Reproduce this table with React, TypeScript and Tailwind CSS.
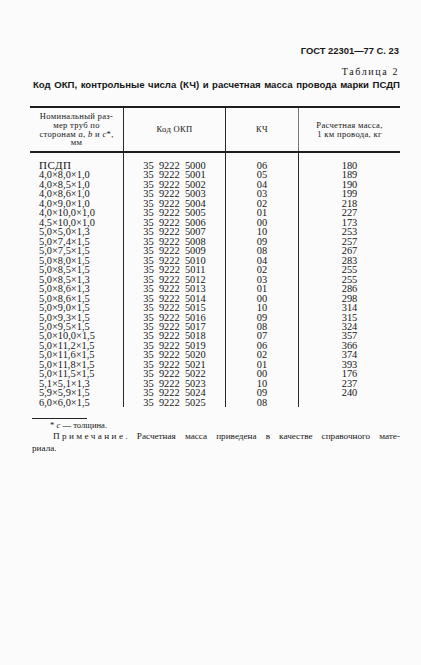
import React from 'react';

type Row = { size: string; code: string; kch: string; mass: string };

const rows: Row[] = [
  { size: 'ПСДП', code: '5000', kch: '06', mass: '180' },
  { size: '4,0×8,0×1,0', code: '5001', kch: '05', mass: '189' },
  { size: '4,0×8,5×1,0', code: '5002', kch: '04', mass: '190' },
  { size: '4,0×8,6×1,0', code: '5003', kch: '03', mass: '199' },
  { size: '4,0×9,0×1,0', code: '5004', kch: '02', mass: '218' },
  { size: '4,0×10,0×1,0', code: '5005', kch: '01', mass: '227' },
  { size: '4,5×10,0×1,0', code: '5006', kch: '00', mass: '173' },
  { size: '5,0×5,0×1,3', code: '5007', kch: '10', mass: '253' },
  { size: '5,0×7,4×1,5', code: '5008', kch: '09', mass: '257' },
  { size: '5,0×7,5×1,5', code: '5009', kch: '08', mass: '267' },
  { size: '5,0×8,0×1,5', code: '5010', kch: '04', mass: '283' },
  { size: '5,0×8,5×1,5', code: '5011', kch: '02', mass: '255' },
  { size: '5,0×8,5×1,3', code: '5012', kch: '03', mass: '255' },
  { size: '5,0×8,6×1,3', code: '5013', kch: '01', mass: '286' },
  { size: '5,0×8,6×1,5', code: '5014', kch: '00', mass: '298' },
  { size: '5,0×9,0×1,5', code: '5015', kch: '10', mass: '314' },
  { size: '5,0×9,3×1,5', code: '5016', kch: '09', mass: '315' },
  { size: '5,0×9,5×1,5', code: '5017', kch: '08', mass: '324' },
  { size: '5,0×10,0×1,5', code: '5018', kch: '07', mass: '357' },
  { size: '5,0×11,2×1,5', code: '5019', kch: '06', mass: '366' },
  { size: '5,0×11,6×1,5', code: '5020', kch: '02', mass: '374' },
  { size: '5,0×11,8×1,5', code: '5021', kch: '01', mass: '393' },
  { size: '5,0×11,5×1,5', code: '5022', kch: '00', mass: '176' },
  { size: '5,1×5,1×1,3', code: '5023', kch: '10', mass: '237' },
  { size: '5,9×5,9×1,5', code: '5024', kch: '09', mass: '240' },
  { size: '6,0×6,0×1,5', code: '5025', kch: '08', mass: '' },
];

const grid = 'grid grid-cols-[94px_102px_73px_101px]';

export default function App() {
  return (
    <div className="w-[421px] h-[665px] bg-[#fbfbfb] pt-[45px] pl-[30px] pr-[21px] font-['Liberation_Serif',serif] text-[#161616]">
      <div className="flex justify-end h-[12px] leading-[12px] text-[9.4px] font-bold font-['Liberation_Sans',sans-serif] pr-[1px]">
        ГОСТ 22301—77 С. 23
      </div>

      <div className="mt-[9px] flex justify-end h-[12px] leading-[12px] text-[10px] tracking-[1.6px] pr-[1px]">
        Таблица 2
      </div>

      <div className="mt-[1px] h-[12px] leading-[12px] text-[9.6px] font-bold font-['Liberation_Sans',sans-serif] text-justify [text-align-last:justify] pl-[3px]">
        Код ОКП, контрольные числа (КЧ) и расчетная масса провода марки ПСДП
      </div>

      {/* table */}
      <div className="mt-[15px]">
        <div className={`${grid} h-[47px] border-t-2 border-b-2 border-[#1e1e1e] text-[8.6px] leading-[8.6px] tracking-[0.3px] text-center`}>
          <div className="flex flex-col items-center justify-center border-r border-[#2a2a2a]">
            <span>Номинальный раз-</span>
            <span>мер труб по</span>
            <span>
              сторонам <i>a</i>, <i>b</i> и <i>c</i>*,
            </span>
            <span>мм</span>
          </div>
          <div className="flex items-center justify-center border-r border-[#2a2a2a]">Код ОКП</div>
          <div className="flex items-center justify-center border-r border-[#777]">КЧ</div>
          <div className="flex flex-col items-center justify-center">
            <span>Расчетная масса,</span>
            <span>1 км провода, кг</span>
          </div>
        </div>

        <div className={`${grid} h-[8px]`}>
          <div className="border-r border-[#2a2a2a]" />
          <div className="border-r border-[#2a2a2a]" />
          <div className="border-r border-[#2a2a2a]" />
          <div />
        </div>

        {rows.map((r, i) => (
          <div key={r.code} className={`${grid} h-[9.48px] leading-[9.48px] text-[10.4px]`}>
            <div className={`pl-[9px] border-r border-[#2a2a2a] ${i === 0 ? 'text-[11px] tracking-[0.6px]' : ''}`}>
              {r.size}
            </div>
            <div className="text-center border-r border-[#2a2a2a] whitespace-pre">35  9222  {r.code}</div>
            <div className="text-center border-r border-[#2a2a2a]">{r.kch}</div>
            <div className="text-center">{r.mass}</div>
          </div>
        ))}
      </div>

      {/* notes */}
      <div className="mt-[11px] ml-[2px] w-[55px] h-[1px] bg-[#222]" />
      <div className="mt-[1px] pl-[20px] h-[10px] leading-[11px] text-[8.6px]">
        * <i>c</i> — толщина.
      </div>
      <div className="mt-[1px] pl-[23px] h-[11.5px] leading-[11.5px] text-[9.2px] text-justify [text-align-last:justify]">
        <span className="tracking-[2.4px]">Примечание</span>. Расчетная масса приведена в качестве справочного мате-
      </div>
      <div className="pl-[2px] h-[11.5px] leading-[11.5px] text-[9.2px]">риала.</div>
    </div>
  );
}
